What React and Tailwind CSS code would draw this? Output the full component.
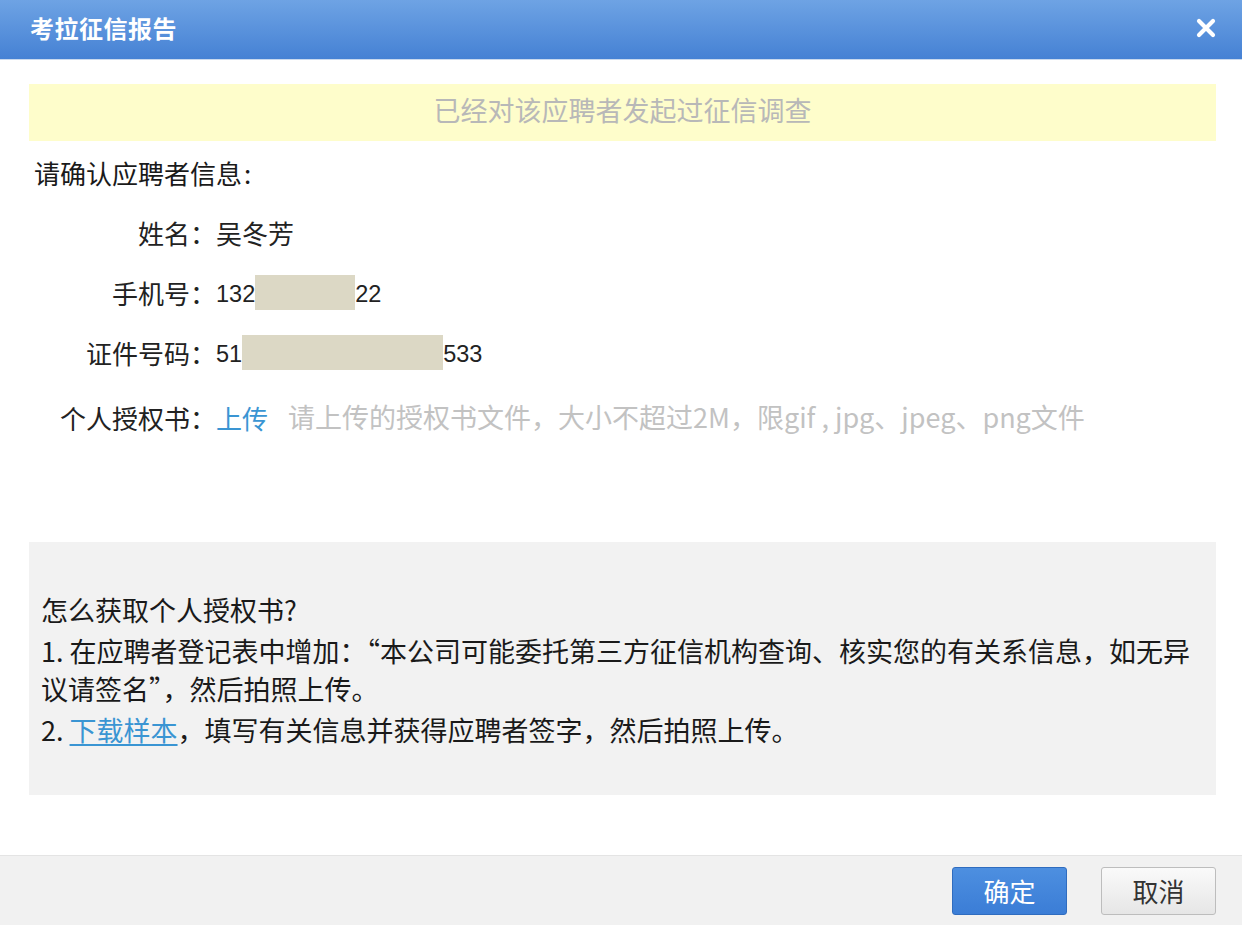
export default function App() {
  const font = { fontFamily: '"Noto Sans CJK SC", "Liberation Sans", sans-serif' };
  const digits = { fontFamily: '"Liberation Sans", Arial, sans-serif' };
  return (
    <div className="w-[1242px] h-[925px] bg-white flex flex-col overflow-hidden text-[#222]" style={font}>
      {/* header */}
      <div className="h-[60px] shrink-0 flex items-center justify-between pl-[30px] pr-[25px] pb-[4px] bg-gradient-to-b from-[#6ea3e4] to-[#4581d4] border-b border-[#c9d9ee]">
        <span className="text-white text-[24px] font-bold tracking-[0.5px]">考拉征信报告</span>
        <svg width="22" height="22" viewBox="0 0 22 22">
          <path d="M4 4 L18 18 M18 4 L4 18" stroke="white" strokeWidth="4.2" strokeLinecap="round" />
        </svg>
      </div>

      <div className="flex-1 flex flex-col pl-[29px] pr-[26px]">
        {/* notice */}
        <div className="mt-[24px] h-[57px] pb-[4px] bg-[#fefdcb] flex items-center justify-center text-[27px] text-[#b8b8b8]">
          已经对该应聘者发起过征信调查
        </div>

        <div className="mt-[13px] h-[36px] flex items-center pl-[5px] text-[26px] text-[#1a1a1a]">
          请确认应聘者信息<span className="ml-[2px]">:</span>
        </div>

        <div className="mt-[12px] flex flex-col text-[26px]">
          <div className="h-[60px] flex items-center">
            <span className="w-[187px] text-right text-[#222]">姓名：</span>
            <span>吴冬芳</span>
          </div>
          <div className="h-[60px] flex items-center">
            <span className="w-[187px] text-right">手机号：</span>
            <span className="flex items-center text-[23.5px]" style={digits}>
              <span className="translate-y-[3px]">132</span>
              <span className="inline-block w-[100px] h-[35px] bg-[#dcd8c5]" />
              <span className="translate-y-[3px]">22</span>
            </span>
          </div>
          <div className="h-[60px] flex items-center">
            <span className="w-[187px] text-right">证件号码：</span>
            <span className="flex items-center text-[23.5px]" style={digits}>
              <span className="translate-y-[3px]">51</span>
              <span className="inline-block w-[201px] h-[35px] bg-[#dcd8c5]" />
              <span className="translate-y-[3px]">533</span>
            </span>
          </div>
          <div className="mt-[5px] h-[60px] flex items-center">
            <span className="w-[187px] text-right">个人授权书：</span>
            <span className="text-[#3a95d3]">上传</span>
            <span className="ml-[20px] text-[27px] text-[#c2c2c2]">请上传的授权书文件，大小不超过2M，限gif , jpg、jpeg、png文件</span>
          </div>
        </div>

        {/* help box */}
        <div className="mt-[95px] h-[253px] bg-[#f2f2f2] pl-[12px] pr-[18px] pt-[49px] text-[27px] text-[#1a1a1a] leading-[38px] flex flex-col gap-[3px]">
          <p>怎么获取个人授权书?</p>
          <p>1. 在应聘者登记表中增加：“本公司可能委托第三方征信机构查询、核实您的有关系信息，如无异议请签名”，然后拍照上传。</p>
          <p>
            2. <a className="text-[#3a95d3] underline underline-offset-[3px]">下载样本</a>，填写有关信息并获得应聘者签字，然后拍照上传。
          </p>
        </div>
      </div>

      {/* footer */}
      <div className="h-[70px] shrink-0 bg-[#f1f1f1] border-t border-[#e4e4e4] flex items-center justify-end pr-[26px] gap-[34px]">
        <button className="w-[115px] h-[48px] rounded-[3px] border border-[#2f6cbf] bg-gradient-to-b from-[#4d8fe0] to-[#3b7dd6] text-white text-[26px]">
          确定
        </button>
        <button className="w-[115px] h-[48px] rounded-[3px] border border-[#bdbdbd] bg-gradient-to-b from-[#fafafa] to-[#e6e6e6] text-[#333] text-[26px]">
          取消
        </button>
      </div>
    </div>
  );
}
